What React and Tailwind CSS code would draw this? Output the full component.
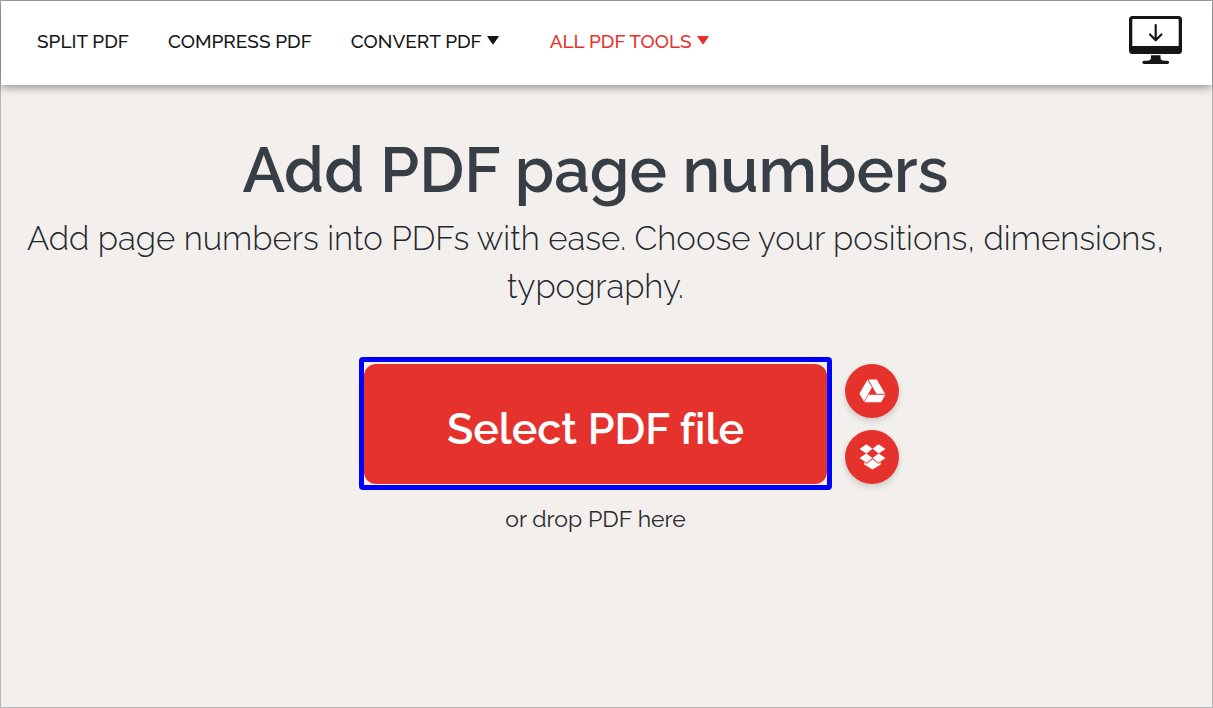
function Caret() {
  return (
    <svg viewBox="0 0 12 9" className="h-[9px] w-3 fill-current" aria-hidden="true">
      <path d="M.8 0h10.400q.8 0 .4.800L6.600 8.100q-.6.700-1.200 0L.4.800Q0 0 .8 0z" />
    </svg>
  );
}

function DesktopIcon() {
  return (
    <svg viewBox="0 0 53 51" className="h-[51px] w-[53px]" aria-hidden="true">
      <path
        fill="#161616"
        fillRule="evenodd"
        d="M3.500 0h46a3.500 3.500 0 0 1 3.500 3.500v31a3.500 3.500 0 0 1-3.500 3.500h-46a3.500 3.500 0 0 1-3.500-3.500v-31a3.500 3.500 0 0 1 3.500-3.500zM4.300 3a1 1 0 0 0-1 1v26h46.400V4a1 1 0 0 0-1-1z"
      />
      <path fill="#161616" d="M22 39.200h9.500v3q.5 2.500 4 2.500h3a1.600 1.600 0 0 1 0 3.300H15a1.600 1.600 0 0 1 0-3.300h3q3.500 0 4-2.500z" />
      <path d="M26.700 9v15M21 18.500l5.700 5.800 5.700-5.800" fill="none" stroke="#161616" strokeWidth="2.200" strokeLinecap="round" strokeLinejoin="round" />
    </svg>
  );
}

function DriveIcon() {
  return (
    <svg viewBox="0 0 27 24" className="h-6 w-[27px] fill-white" aria-hidden="true">
      <path d="M8.400.8L12.900 8.500 5 22.400.4 14.800z" />
      <path d="M9.400.5h8.400l8.300 14.200h-8.600z" />
      <path d="M9.500 15.800h16.900l-4.300 7.400H5.400z" />
    </svg>
  );
}

function DropboxIcon() {
  return (
    <svg viewBox="0 0 27 26" className="h-[26px] w-[27px] fill-white" aria-hidden="true">
      <path d="M7.500.3l6 4.400-6.200 4.700L.5 5zM19.500.3l7 4.700-6.800 4.400-6.200-4.700zM7.300 9.400l6.200 4.700-6 4.600L.5 14.100zM19.700 9.400l6.800 4.700-7 4.600-6-4.600zM13.500 15.300l6 4.500 2.300-1.500v2.200l-8.300 5-8.300-5v-2.200l2.300 1.500z" />
    </svg>
  );
}

export default function App() {
  return (
    <div className="flex min-h-screen flex-col border border-[#b5b4b3] bg-[#f2efec] font-['Raleway','Lato',sans-serif] text-[#161616]">
      <header className="flex h-21 items-center justify-between bg-white pr-[30px] pb-[3px] pl-9 shadow-[0_1px_10px_rgba(0,0,0,0.5)]">
        <nav className="flex items-center gap-[39px] pb-0.5 text-[19px] leading-7 font-medium whitespace-nowrap">
          <a href="#split">SPLIT PDF</a>
          <a href="#compress">COMPRESS PDF</a>
          <button type="button" className="flex items-center gap-[5px]">
            CONVERT PDF <Caret />
          </button>
          <button type="button" className="ml-3 flex items-center gap-[5px] text-[#e5322d]">
            ALL PDF TOOLS <Caret />
          </button>
        </nav>
        <a href="#desktop" aria-label="Download the desktop app">
          <DesktopIcon />
        </a>
      </header>
      <main className="flex flex-1 flex-col items-center pt-[45px] pr-[22px] text-center">
        <h1 className="text-[63px] leading-20 font-semibold text-[#383e45]">Add PDF page numbers</h1>
        <h2 className="mt-[5px] text-[33px] leading-12 font-light text-[#23282e]">
          Add page numbers into PDFs with ease. Choose your positions, dimensions,
          <br />
          typography.
        </h2>
        <div className="relative mt-[46px]">
          <div className="rounded-sm border-5 border-[#0000fa] bg-[#f2eff5] pt-0.5 pb-px">
            <button
              type="button"
              className="h-30 w-[463px] rounded-xl bg-[#e5322d] pt-2.5 text-[43px] leading-12 font-semibold text-white [font-variant-ligatures:none]"
            >
              Select PDF file
            </button>
          </div>
          <div className="absolute top-[7px] left-full ml-[13px] flex flex-col gap-3">
            <button
              type="button"
              aria-label="Select from Google Drive"
              className="flex size-[54px] items-center justify-center rounded-full bg-[#e5322d] shadow-[0_3px_6px_rgba(0,0,0,0.16)]"
            >
              <DriveIcon />
            </button>
            <button
              type="button"
              aria-label="Select from Dropbox"
              className="flex size-[54px] items-center justify-center rounded-full bg-[#e5322d] shadow-[0_3px_6px_rgba(0,0,0,0.16)]"
            >
              <DropboxIcon />
            </button>
          </div>
        </div>
        <p className="mt-[11px] text-[23px] leading-9 text-[#2b2b2b]">or drop PDF here</p>
      </main>
    </div>
  );
}
